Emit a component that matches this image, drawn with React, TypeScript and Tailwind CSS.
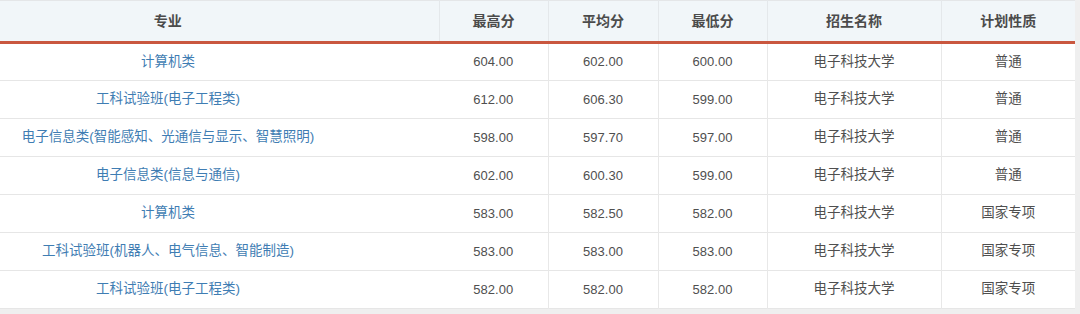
const COLS = ["专业", "最高分", "平均分", "最低分", "招生名称", "计划性质"];

const ROWS: [string, string, string, string, string, string][] = [
  ["计算机类", "604.00", "602.00", "600.00", "电子科技大学", "普通"],
  ["工科试验班(电子工程类)", "612.00", "606.30", "599.00", "电子科技大学", "普通"],
  ["电子信息类(智能感知、光通信与显示、智慧照明)", "598.00", "597.70", "597.00", "电子科技大学", "普通"],
  ["电子信息类(信息与通信)", "602.00", "600.30", "599.00", "电子科技大学", "普通"],
  ["计算机类", "583.00", "582.50", "582.00", "电子科技大学", "国家专项"],
  ["工科试验班(机器人、电气信息、智能制造)", "583.00", "583.00", "583.00", "电子科技大学", "国家专项"],
  ["工科试验班(电子工程类)", "582.00", "582.00", "582.00", "电子科技大学", "国家专项"],
];

const font = { fontFamily: '"Liberation Sans", "Noto Sans CJK SC", sans-serif' };

function cellClass(i: number, last: boolean) {
  if (i === 0) return "pr-[103px] text-[13.5px] text-[#3f7db3]";
  if (i >= 4) return "text-[13.5px] text-[#4f4f4f]" + (last ? "" : " border-r border-[#e8e8e8]");
  return "text-[13px] text-[#4f4f4f] border-r border-[#e8e8e8]";
}

export default function App() {
  return (
    <div className="h-[314px] w-full bg-[#efefef]" style={font}>
      <div className="w-[1075px] bg-white">
        <table className="w-[1075px] table-fixed border-collapse">
          <colgroup>
            <col className="w-[439px]" />
            <col className="w-[109px]" />
            <col className="w-[110px]" />
            <col className="w-[109px]" />
            <col className="w-[174px]" />
            <col className="w-[134px]" />
          </colgroup>
          <thead>
            <tr className="border-t border-[#e4e6e8] bg-[#f1f6f9]">
              {COLS.map((c, i) => (
                <th
                  key={c}
                  className={
                    "h-[42px] border-b-[3px] border-b-[#c9573f] p-0 text-center text-[14px] font-bold text-[#4b4b4b] " +
                    (i === 0 ? "pr-[103px] " : "") +
                    (i < COLS.length - 1 ? "border-r border-r-[#e4e8eb]" : "")
                  }
                >
                  {c}
                </th>
              ))}
            </tr>
          </thead>
          <tbody>
            {ROWS.map((r, ri) => (
              <tr key={ri} className="border-b border-[#e6e6e6]">
                {r.map((v, i) => (
                  <td
                    key={i}
                    className={"h-[38px] p-0 text-center " + cellClass(i, i === r.length - 1)}
                  >
                    {v}
                  </td>
                ))}
              </tr>
            ))}
          </tbody>
        </table>
      </div>
    </div>
  );
}
